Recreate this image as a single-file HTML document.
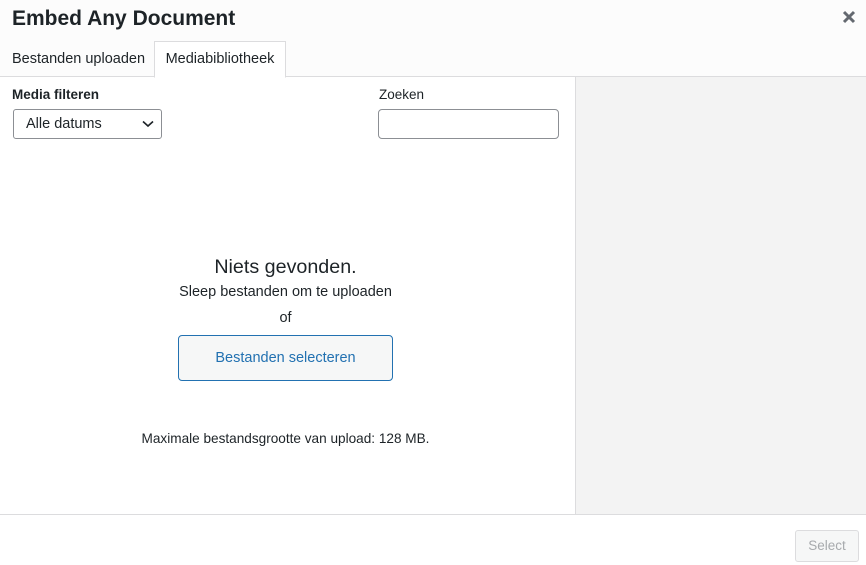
<!DOCTYPE html>
<html><head><style>
*{box-sizing:border-box;margin:0;padding:0}
body{width:866px;height:565px;overflow:hidden;background:#fff;font-family:"Liberation Sans",Arial,sans-serif;color:#1d2327;position:relative}
.hdr{position:absolute;left:0;top:0;width:866px;height:77px;background:#fcfcfc;border-bottom:1px solid #dcdcde}
h1{position:absolute;left:12px;top:5px;font-size:21px;font-weight:bold;line-height:28px}
.close{position:absolute;left:841px;top:9px;width:16px;height:16px}
.tab{position:absolute;top:41px;height:36px;font-size:14.5px;line-height:36px}
.t1{left:12px}
.t2{left:154px;width:132px;background:#fff;border:1px solid #dcdcde;border-bottom:1px solid #fff;height:37px;text-align:center;line-height:35px}
.side{position:absolute;left:575px;top:77px;width:291px;height:437px;background:#f3f3f3;border-left:1px solid #dcdcde}
.lbl{position:absolute;font-size:13.5px}
.sel{position:absolute;left:13px;top:109px;width:149px;height:30px;border:1px solid #8c8f94;border-radius:3px;font-size:14.5px;line-height:28px;padding-left:12px}
.inp{position:absolute;left:378px;top:109px;width:181px;height:30px;border:1px solid #8c8f94;border-radius:4px}
.c{position:absolute;left:0;width:571px;text-align:center}
.btn{position:absolute;left:178px;top:335px;width:215px;height:46px;border:1px solid #2271b1;border-radius:4px;background:#f6f7f7;color:#2271b1;font-size:14.5px;line-height:44px;text-align:center}
.foot{position:absolute;left:0;top:514px;width:866px;height:51px;border-top:1px solid #dcdcde;background:#fff}
.sb{position:absolute;left:795px;top:530px;width:64px;height:32px;border:1px solid #dcdcde;border-radius:3px;background:#f6f7f7;color:#a7aaad;font-size:13.5px;line-height:30px;text-align:center}
</style></head><body>
<div class="hdr"></div>
<h1>Embed Any Document</h1>
<svg class="close" viewBox="0 0 16 16"><path d="M3 3L13 13M13 3L3 13" stroke="#646970" stroke-width="3"/></svg>
<div class="tab t1">Bestanden uploaden</div>
<div class="tab t2">Mediabibliotheek</div>
<div class="side"></div>
<div class="lbl" style="left:12px;top:87px;font-weight:bold">Media filteren</div>
<div class="sel">Alle datums<svg style="position:absolute;left:128px;top:10px" width="12" height="8" viewBox="0 0 12 8"><path d="M1 1.5L6 6L11 1.5" stroke="#1d2327" stroke-width="1.6" fill="none"/></svg></div>
<div class="lbl" style="left:379px;top:87px">Zoeken</div>
<div class="inp"></div>
<div class="c" style="top:256px;font-size:19.7px">Niets gevonden.</div>
<div class="c" style="top:284px;font-size:14.5px">Sleep bestanden om te uploaden</div>
<div class="c" style="top:310px;font-size:14.5px">of</div>
<div class="btn">Bestanden selecteren</div>
<div class="c" style="top:431px;font-size:13.6px">Maximale bestandsgrootte van upload: 128 MB.</div>
<div class="foot"></div>
<div class="sb">Select</div>
</body></html>
